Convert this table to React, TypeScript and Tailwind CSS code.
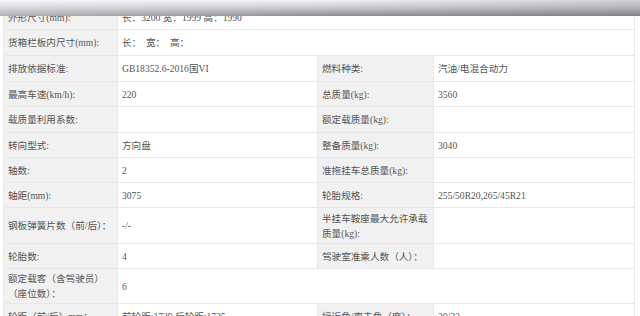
type Row = {
  h: string;
  cells: { text: string; label?: boolean; span?: number }[];
};

const rows: Row[] = [
  { h: "h-[25px]", cells: [{ text: "外形尺寸(mm):", label: true }, { text: "长：3200 宽：1999 高：1990", span: 3 }] },
  { h: "h-[26px]", cells: [{ text: "货箱栏板内尺寸(mm):", label: true }, { text: "长：  宽：  高：", span: 3 }] },
  {
    h: "h-[26px]",
    cells: [
      { text: "排放依据标准:", label: true },
      { text: "GB18352.6-2016国VI" },
      { text: "燃料种类:", label: true },
      { text: "汽油/电混合动力" },
    ],
  },
  {
    h: "h-[25px]",
    cells: [
      { text: "最高车速(km/h):", label: true },
      { text: "220" },
      { text: "总质量(kg):", label: true },
      { text: "3560" },
    ],
  },
  {
    h: "h-[26px]",
    cells: [
      { text: "载质量利用系数:", label: true },
      { text: "" },
      { text: "额定载质量(kg):", label: true },
      { text: "" },
    ],
  },
  {
    h: "h-[25px]",
    cells: [
      { text: "转向型式:", label: true },
      { text: "方向盘" },
      { text: "整备质量(kg):", label: true },
      { text: "3040" },
    ],
  },
  {
    h: "h-[25px]",
    cells: [
      { text: "轴数:", label: true },
      { text: "2" },
      { text: "准拖挂车总质量(kg):", label: true },
      { text: "" },
    ],
  },
  {
    h: "h-[25px]",
    cells: [
      { text: "轴距(mm):", label: true },
      { text: "3075" },
      { text: "轮胎规格:", label: true },
      { text: "255/50R20,265/45R21" },
    ],
  },
  {
    h: "h-[36px]",
    cells: [
      { text: "钢板弹簧片数（前/后）：", label: true },
      { text: "-/-" },
      { text: "半挂车鞍座最大允许承载\n质量(kg):", label: true },
      { text: "" },
    ],
  },
  {
    h: "h-[25px]",
    cells: [
      { text: "轮胎数:", label: true },
      { text: "4" },
      { text: "驾驶室准乘人数（人）：", label: true },
      { text: "" },
    ],
  },
  {
    h: "h-[35px]",
    cells: [
      { text: "额定载客（含驾驶员）\n（座位数）：", label: true },
      { text: "6", span: 3 },
    ],
  },
  {
    h: "h-[26px]",
    cells: [
      { text: "轮距（前/后）mm：", label: true },
      { text: "前轮距:1729 后轮距:1725" },
      { text: "接近角/离去角（度）：", label: true },
      { text: "20/22" },
    ],
  },
];

export default function App() {
  return (
    <div
      className="relative h-[316px] w-[640px] overflow-hidden bg-white text-[9.6px] text-[#555]"
      style={{ fontFamily: '"Liberation Serif", "Noto Sans CJK SC", serif' }}
    >
      <table className="ml-[3px] mt-[4px] w-[631px] table-fixed border-collapse">
        <colgroup>
          <col className="w-[114px]" />
          <col className="w-[200px]" />
          <col className="w-[116px]" />
          <col className="w-[201px]" />
        </colgroup>
        <tbody>
          {rows.map((row, i) => (
            <tr key={i} className={row.h}>
              {row.cells.map((c, j) => (
                <td
                  key={j}
                  colSpan={c.span}
                  className={`border border-[#e8e8e8] px-[4px] align-middle whitespace-pre leading-[15px] ${
                    c.label ? "bg-[#f1f1f1]" : "bg-white"
                  }`}
                >
                  {c.text}
                </td>
              ))}
            </tr>
          ))}
        </tbody>
      </table>
      <div className="absolute left-0 right-0 top-0 h-[16px] bg-gradient-to-b from-[#f3f3f5] via-[#c8c8cc] to-[#8d8d95]" />
      <div className="absolute left-0 right-0 top-0 h-[16px] bg-gradient-to-r from-white/30 via-transparent to-[#50505a]/20" />
    </div>
  );
}
